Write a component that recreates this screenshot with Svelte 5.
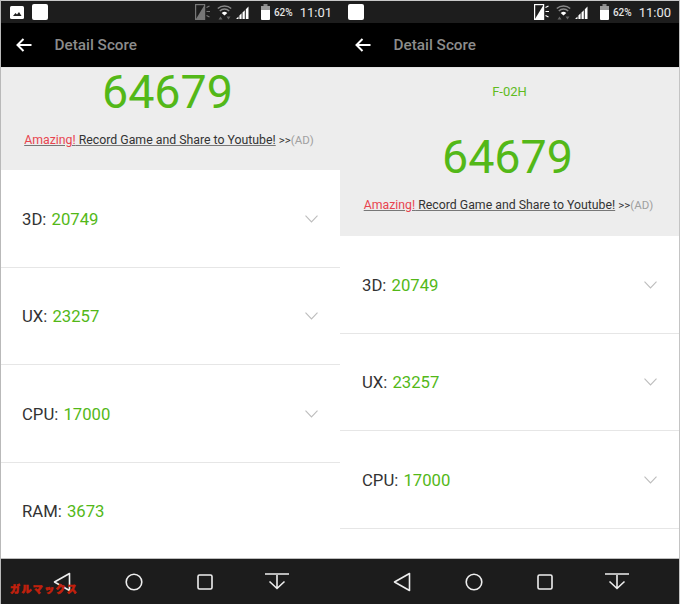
<script>
  const screens = [
    { time: '11:01', compact: true, faded: true, rows: [['3D', '20749'], ['UX', '23257'], ['CPU', '17000'], ['RAM', '3673']] },
    { time: '11:00', compact: false, faded: false, rows: [['3D', '20749'], ['UX', '23257'], ['CPU', '17000']] }
  ];
</script>

<div class="page">
  {#each screens as s, i}
    <section class="screen" class:first={i === 0} class:last={i === 1}>
      <div class="status">
        <div class="notes">
          {#if s.compact}
            <svg class="pic" width="14" height="13" viewBox="0 0 14 13"><rect width="14" height="13" rx="1.500" fill="#fff"/><path d="M3 10l2.500-3 1.500 1.500 2-2.500 2.500 4z" fill="#222"/></svg>
          {/if}
          <span class="square"></span>
        </div>
        <div class="sys">
          <svg width="15" height="16" viewBox="0 0 15 16" class:dim={s.faded}>
            <rect x="0.600" y="0.600" width="9" height="14.800" fill="none" stroke="#fff" stroke-width="1.200"/>
            <path d="M1 15L9.500 1V15z" fill="#fff"/>
            <path d="M11.500 3.500l3-1.500M11.500 7.500h3.500M11.500 11.500l3 1.500" stroke="#fff" stroke-width="1.200" fill="none"/>
          </svg>
          <svg class="wifi" width="15" height="16" viewBox="0 0 15 16">
            <path d="M0.800 4.500a10 10 0 0 1 13.400 0M2.800 7a6.800 6.800 0 0 1 9.400 0" stroke="#888" stroke-width="1.500" fill="none"/>
            <path d="M4.700 9a4 4 0 0 1 5.600 0L7.500 11.500z" fill="#fff"/>
            <path d="M1.500 15.500l2-3 2 3zM9.500 12.500h4l-2 3z" fill="#666"/>
          </svg>
          <svg class="signal" width="13" height="14" viewBox="0 0 13 14">
            <path d="M0 14L2.500 11.500V14zM3.400 10.500L5.600 8.300V14H3.400zM6.500 7.500L8.800 5.200V14H6.500zM9.800 4.200L12.500 1.500V14H9.800z" fill="#fff"/>
          </svg>
          <svg class="battery" width="9" height="16" viewBox="0 0 9 16">
            <rect x="2.500" y="0" width="4" height="2" fill="#888"/>
            <rect x="0" y="2" width="9" height="14" rx="1" fill="#fff"/>
            <rect x="0" y="2" width="9" height="4" fill="#999"/>
          </svg>
          <span class="pct">62%</span>
          <span class="time">{s.time}</span>
        </div>
      </div>

      <header class="bar">
        <svg width="16" height="14" viewBox="0 0 16 14"><path d="M15.500 7H2M7.500 1L1.500 7l6 6" fill="none" stroke="#fff" stroke-width="2"/></svg>
        <h1>Detail Score</h1>
      </header>

      <div class="body">
        <div class="hero" class:compact={s.compact}>
          {#if !s.compact}<div class="device">F-02H</div>{/if}
          <div class="score">64679</div>
          <div class="promo"><span class="link"><span class="red">Amazing!</span> Record Game and Share to Youtube!</span> <span class="arrows">&gt;&gt;</span><span class="ad">(AD)</span></div>
        </div>
        {#each s.rows as [label, value]}
          <div class="row">
            <span class="label">{label}: <span class="val">{value}</span></span>
            {#if label !== 'RAM'}
              <svg class="chev" width="13" height="8" viewBox="0 0 13 8"><path d="M0.500 0.700L6.500 7l6-6.300" fill="none" stroke="#bdbdbd" stroke-width="1.100"/></svg>
            {/if}
          </div>
        {/each}
      </div>

      <nav class="nav">
        <svg width="18" height="20" viewBox="0 0 18 20"><path d="M16.500 1.500v17L1.500 10z" fill="none" stroke="#eee" stroke-width="1.600" stroke-linejoin="round"/></svg>
        <svg width="18" height="18" viewBox="0 0 18 18"><circle cx="9" cy="9" r="7.800" fill="none" stroke="#eee" stroke-width="1.600"/></svg>
        <svg width="16" height="16" viewBox="0 0 16 16"><rect x="1" y="1" width="14" height="14" rx="1.500" fill="none" stroke="#eee" stroke-width="1.600"/></svg>
        <svg width="24" height="17" viewBox="0 0 24 17"><path d="M0 1h24M12 2v13M4.500 8.500L12 15.500l7.500-7" fill="none" stroke="#eee" stroke-width="1.600"/></svg>
      </nav>

      {#if i === 0}<span class="mark">ガルマックス</span>{/if}
    </section>
  {/each}
</div>

<style>
  :global(body) { margin: 0; background: #fff; }
  .page { display: flex; width: 680px; height: 604px; overflow: hidden; font-family: Roboto, "Noto Sans CJK JP", sans-serif; }
  .screen { position: relative; width: 340px; height: 604px; display: flex; flex-direction: column; box-sizing: border-box; background: #fff; }
  .screen.first { border-left: 1px solid #b9b9b9; }
  .screen.last { border-right: 1px solid #c4c4c4; }

  .status { height: 23px; flex: none; background: #1d1d1d; display: flex; align-items: center; justify-content: space-between; padding: 0 8px 0 9px; border-top: 1px solid #c8c8c8; box-sizing: border-box; }
  .last .status { padding-left: 8px; }
  .notes { display: flex; align-items: center; gap: 8px; }
  .square { width: 16px; height: 16px; border-radius: 2px; background: #fff; }
  .sys { display: flex; align-items: center; color: #fff; }
  .dim { opacity: .4; }
  .wifi { margin-left: 7px; }
  .signal { margin-left: 4px; }
  .battery { margin-left: 12px; }
  .pct { margin-left: 4px; font-size: 10px; font-weight: 500; color: #e4e4e4; }
  .time { margin-left: 7px; font-size: 13px; color: #e8e8e8; }

  .bar { height: 44px; flex: none; background: #000; display: flex; align-items: center; padding-left: 14.500px; }
  .bar h1 { margin: 0 0 0 23px; font-size: 15.300px; font-weight: 500; color: #8c8c8c; }

  .body { flex: 1; min-height: 0; border-top: 1px solid #e4e4e4; }
  .hero { height: 168px; box-sizing: border-box; background: #ededed; display: flex; flex-direction: column; align-items: center; }
  .hero.compact { height: 102px; }
  .device { margin-top: 17px; font-size: 13px; line-height: 14px; color: #5fbb1f; }
  .score { margin-top: 35px; font-size: 46.700px; line-height: 46px; color: #53b818; padding-right: 4px; }
  .compact .score { margin-top: 1px; padding-right: 6px; }
  .promo { margin-top: 17px; font-size: 12.300px; line-height: 16px; color: #333; white-space: nowrap; padding-right: 2px; }
  .compact .promo { padding-right: 3px; }
  .link { text-decoration: underline; text-decoration-color: #777; }
  .red { color: #e8444f; }
  .arrows { font-size: 11.500px; }
  .ad { color: #a0a0a0; font-size: 11.500px; }

  .row { height: 97.500px; box-sizing: border-box; background: #fff; border-bottom: 1px solid #e6e6e6; display: flex; align-items: center; justify-content: space-between; padding: 2px 22px 0 21px; }
  .last .row { padding-left: 22px; }
  .label { font-size: 16.700px; color: #333; }
  .val { color: #53b818; margin-left: 1px; }
  .chev { margin-top: -1px; }

  .nav { height: 46px; flex: none; background: #1c1c1c; border-top: 1px solid #bdbdbd; box-sizing: border-box; display: grid; grid-template-columns: repeat(4, 71.700px); align-items: center; justify-items: center; padding-left: 26px; }
  .first .nav { padding-left: 25px; }
  .mark { position: absolute; left: 9px; bottom: 9px; font-size: 10px; line-height: 10px; font-weight: 900; letter-spacing: 1.400px; color: #c2200c; -webkit-text-stroke: .6px #c2200c; white-space: nowrap; }
</style>
